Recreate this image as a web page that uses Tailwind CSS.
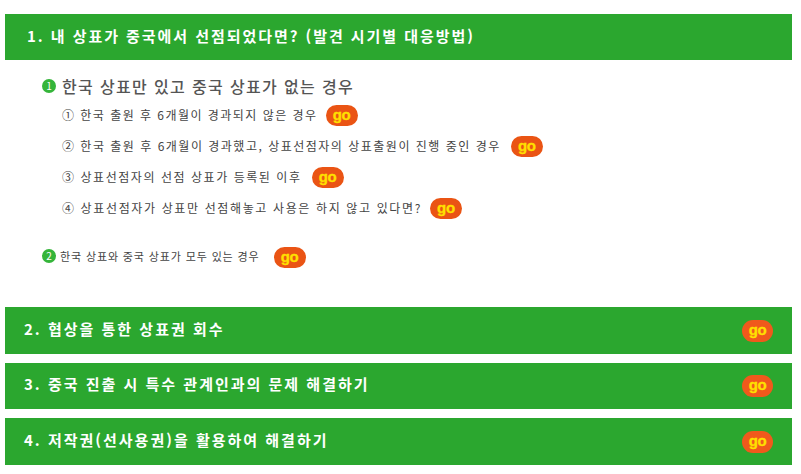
<!DOCTYPE html>
<html lang="ko">
  <head>
    <meta charset="UTF-8" />
    <title>상표 선점 대응방법</title>
    <script src="https://cdn.jsdelivr.net/npm/@tailwindcss/browser@4"></script>
  </head>
  <body class="bg-white font-['Noto_Sans_CJK_KR','Noto_Sans',sans-serif] text-[#444]">
    <div class="pl-[5px] pr-[9px] pt-[14px]">
      <!-- Section 1 -->
      <div class="h-[46px] bg-[#2ba72f] flex items-center pl-[22px] pb-[2px] text-white text-[15px] font-bold tracking-[1.95px]">
        1. 내 상표가 중국에서 선점되었다면? (발견 시기별 대응방법)
      </div>
      <div class="h-[247px] pt-[15px] pl-[37px]">
        <div class="flex items-center h-[22px]">
          <span class="w-[14px] h-[14px] rounded-full bg-[#35b53a] text-white text-[10px] leading-none flex items-center justify-center">1</span>
          <span class="ml-[6px] text-[16px] font-medium tracking-[1.35px] text-[#555]">한국 상표만 있고 중국 상표가 없는 경우</span>
        </div>
        <div class="pl-[20px] text-[12px] text-[#444]">
          <div class="flex items-center h-[31px] mt-[3px]">
            <span class="pb-[2px] tracking-[1.47px]">① 한국 출원 후 6개월이 경과되지 않은 경우</span>
            <span class="ml-[8px] w-[32px] h-[21px] rounded-full bg-[#ea5414] text-[#ffe000] font-['Liberation_Sans',sans-serif] text-[15px] font-bold tracking-[-0.3px] [-webkit-text-stroke:0.3px_#ffe000] leading-none flex items-center justify-center pb-[3px]">go</span>
          </div>
          <div class="flex items-center h-[31px]">
            <span class="pb-[2px] tracking-[1.5px]">② 한국 출원 후 6개월이 경과했고, 상표선점자의 상표출원이 진행 중인 경우</span>
            <span class="ml-[10px] w-[32px] h-[21px] rounded-full bg-[#ea5414] text-[#ffe000] font-['Liberation_Sans',sans-serif] text-[15px] font-bold tracking-[-0.3px] [-webkit-text-stroke:0.3px_#ffe000] leading-none flex items-center justify-center pb-[3px]">go</span>
          </div>
          <div class="flex items-center h-[31px]">
            <span class="pb-[2px] tracking-[1.55px]">③ 상표선점자의 선점 상표가 등록된 이후</span>
            <span class="ml-[10px] w-[32px] h-[21px] rounded-full bg-[#ea5414] text-[#ffe000] font-['Liberation_Sans',sans-serif] text-[15px] font-bold tracking-[-0.3px] [-webkit-text-stroke:0.3px_#ffe000] leading-none flex items-center justify-center pb-[3px]">go</span>
          </div>
          <div class="flex items-center h-[31px]">
            <span class="pb-[2px] tracking-[1.63px]">④ 상표선점자가 상표만 선점해놓고 사용은 하지 않고 있다면?</span>
            <span class="ml-[8px] w-[32px] h-[21px] rounded-full bg-[#ea5414] text-[#ffe000] font-['Liberation_Sans',sans-serif] text-[15px] font-bold tracking-[-0.3px] [-webkit-text-stroke:0.3px_#ffe000] leading-none flex items-center justify-center pb-[3px]">go</span>
          </div>
        </div>
        <div class="flex items-center h-[22px] mt-[21px]">
          <span class="w-[14px] h-[14px] rounded-full bg-[#35b53a] text-white text-[10px] leading-none flex items-center justify-center">2</span>
          <span class="ml-[4px] text-[11px] tracking-[0.87px] text-[#444]">한국 상표와 중국 상표가 모두 있는 경우</span>
          <span class="ml-[14px] mt-[3px] w-[32px] h-[21px] rounded-full bg-[#ea5414] text-[#ffe000] font-['Liberation_Sans',sans-serif] text-[15px] font-bold tracking-[-0.3px] [-webkit-text-stroke:0.3px_#ffe000] leading-none flex items-center justify-center pb-[3px]">go</span>
        </div>
      </div>
      <!-- Sections 2-4 -->
      <div class="flex flex-col gap-[9px]">
        <div class="h-[47px] bg-[#2ba72f] flex items-center justify-between pl-[19px] pr-[19px] text-white text-[15px] font-bold tracking-[2px]">
          <span class="pb-[3px]">2. 협상을 통한 상표권 회수</span>
          <span class="w-[31px] h-[22px] rounded-full bg-[#f0591c] text-[#ffe000] font-['Liberation_Sans',sans-serif] text-[15px] font-bold tracking-[-0.3px] [-webkit-text-stroke:0.3px_#ffe000] leading-none flex items-center justify-center pb-[3px]">go</span>
        </div>
        <div class="h-[46px] bg-[#2ba72f] flex items-center justify-between pl-[19px] pr-[19px] text-white text-[15px] font-bold tracking-[2px]">
          <span class="pb-[3px]">3. 중국 진출 시 특수 관계인과의 문제 해결하기</span>
          <span class="w-[31px] h-[22px] rounded-full bg-[#f0591c] text-[#ffe000] font-['Liberation_Sans',sans-serif] text-[15px] font-bold tracking-[-0.3px] [-webkit-text-stroke:0.3px_#ffe000] leading-none flex items-center justify-center pb-[3px]">go</span>
        </div>
        <div class="h-[47px] bg-[#2ba72f] flex items-center justify-between pl-[19px] pr-[19px] text-white text-[15px] font-bold tracking-[2px]">
          <span class="pb-[3px]">4. 저작권(선사용권)을 활용하여 해결하기</span>
          <span class="w-[31px] h-[22px] rounded-full bg-[#f0591c] text-[#ffe000] font-['Liberation_Sans',sans-serif] text-[15px] font-bold tracking-[-0.3px] [-webkit-text-stroke:0.3px_#ffe000] leading-none flex items-center justify-center pb-[3px]">go</span>
        </div>
      </div>
    </div>
  </body>
</html>
